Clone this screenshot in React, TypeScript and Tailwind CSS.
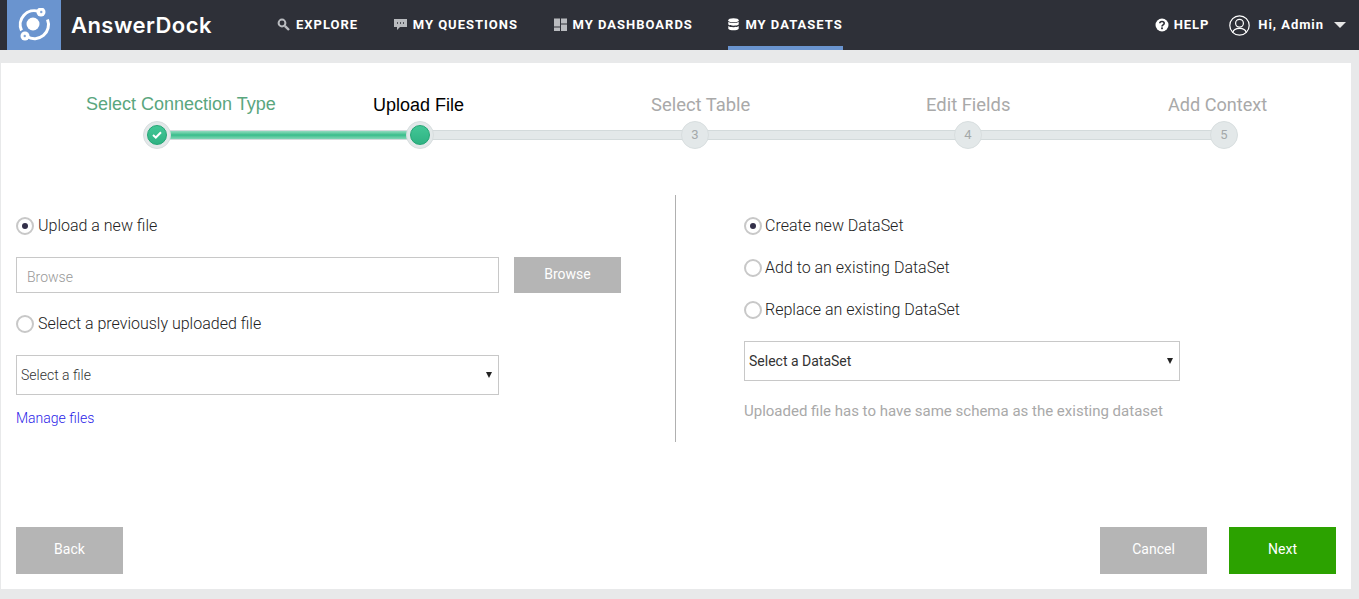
import { useState } from 'react'

function NavItem({ icon, label, active }: { icon: React.ReactNode; label: string; active?: boolean }) {
  return (
    <div className={`flex h-[50px] items-center gap-[6px] border-b-4 pt-[2px] ${active ? 'border-[#6a94cf]' : 'border-transparent'}`}>
      {icon}
      <span className="text-[13px] leading-none font-bold tracking-[1px] text-white">{label}</span>
    </div>
  )
}

function Logo() {
  return (
    <svg width="34" height="34" viewBox="0 0 34 34" fill="none">
      <path d="M22 3.5 A14 14 0 0 0 4.5 22.5" stroke="white" strokeWidth="3" />
      <path d="M10 28.5 A14 14 0 0 0 30.5 11.5" stroke="white" strokeWidth="3" />
      <circle cx="16" cy="16" r="6.5" fill="white" />
      <circle cx="24" cy="4" r="4.5" fill="white" />
      <circle cx="8" cy="28" r="4.5" fill="white" />
      <path d="M23 4 H25.5 M24.2 2.8 V5.2" stroke="#6a94cf" strokeWidth="1" />
      <path d="M6.5 28 H9 M7.8 26.8 V29.2" stroke="#6a94cf" strokeWidth="1" />
    </svg>
  )
}

function Header() {
  return (
    <div className="flex h-[50px] items-start bg-[#2e3038] pl-[7px] font-['Roboto',sans-serif]">
      <div className="flex h-[50px] w-[54px] items-center justify-center bg-[#6a94cf]">
        <Logo />
      </div>
      <div className="ml-[10px] flex h-[50px] w-[206px] items-center font-['Inter',sans-serif] text-[22px] font-semibold tracking-[0.45px] text-white">
        AnswerDock
      </div>
      <div className="flex gap-[35.5px]">
        <NavItem
          label="EXPLORE"
          icon={
            <svg width="13" height="13" viewBox="0 0 13 13" fill="none">
              <circle cx="5" cy="5" r="3.4" stroke="#b9bbbf" strokeWidth="2" />
              <path d="M7.8 7.8 L12 12" stroke="#b9bbbf" strokeWidth="2.4" />
            </svg>
          }
        />
        <NavItem
          label="MY QUESTIONS"
          icon={
            <svg width="13" height="13" viewBox="0 0 13 13">
              <path d="M0 1 H13 V9 H6 L3 12 V9 H0 Z" fill="#b9bbbf" />
              <path d="M3 5 H4 M6 5 H7 M9 5 H10" stroke="#2e3038" strokeWidth="1.4" />
            </svg>
          }
        />
        <NavItem
          label="MY DASHBOARDS"
          icon={
            <svg width="13" height="13" viewBox="0 0 13 13" fill="#b9bbbf">
              <rect x="0" y="0.5" width="6" height="8" />
              <rect x="7" y="0.5" width="6" height="5" />
              <rect x="0" y="9.5" width="6" height="3.5" />
              <rect x="7" y="6.5" width="6" height="6.5" />
            </svg>
          }
        />
        <NavItem
          active
          label="MY DATASETS"
          icon={
            <svg width="11" height="13" viewBox="0 0 11 13" fill="white">
              <ellipse cx="5.5" cy="2.2" rx="5.2" ry="2" />
              <path d="M0.3 3.8 C1.5 5.4 9.5 5.4 10.7 3.8 V6.6 C9.5 8.2 1.5 8.2 0.3 6.6 Z" />
              <path d="M0.3 8 C1.5 9.6 9.5 9.6 10.7 8 V10.8 C9.5 12.8 1.5 12.8 0.3 10.8 Z" />
            </svg>
          }
        />
      </div>
      <div className="ml-auto flex h-[50px] items-center pr-[13px] text-[13px] font-bold text-white">
        <svg width="14" height="14" viewBox="0 0 14 14">
          <circle cx="7" cy="7" r="6.5" fill="white" />
          <path d="M4.8 5.3 C4.8 2.8 9.2 2.8 9.2 5.3 C9.2 6.9 7 6.8 7 8.4" stroke="#2e3038" strokeWidth="1.6" fill="none" />
          <rect x="6.1" y="9.4" width="1.8" height="1.8" fill="#2e3038" />
        </svg>
        <span className="ml-[5px] tracking-[0.95px]">HELP</span>
        <svg width="21" height="21" viewBox="0 0 21 21" fill="none" stroke="white" strokeWidth="1.2" className="ml-[20px]">
          <circle cx="10.5" cy="10.5" r="9.7" />
          <circle cx="10.5" cy="8.2" r="3.9" />
          <path d="M3.8 17.5 C5 12 16 12 17.2 17.5" />
        </svg>
        <span className="ml-[8px] tracking-[0.95px]">Hi, Admin</span>
        <div className="ml-[10px] h-0 w-0 border-x-[6.5px] border-t-[6px] border-x-transparent border-t-[#e6e6e6]" />
      </div>
    </div>
  )
}

const labelClass = "font-['Liberation_Sans',sans-serif] text-[18px] leading-[22px] whitespace-nowrap"
const todoLabelClass = "mt-[1px] font-['Roboto',sans-serif] leading-[22px] whitespace-nowrap text-[#a9a9a9]"

function StepLabels() {
  return (
    <div className="flex items-start pl-[85px]">
      <div className={`${labelClass} w-[287px] text-[#5aa67e]`}>Select Connection Type</div>
      <div className={`${labelClass} mt-[1px] w-[278px] text-black`}>Upload File</div>
      <div className={`${todoLabelClass} w-[275px] text-[18.4px]`}>Select Table</div>
      <div className={`${todoLabelClass} w-[242px] text-[18.4px]`}>Edit Fields</div>
      <div className={`${todoLabelClass} text-[18.1px]`}>Add Context</div>
    </div>
  )
}

function StepDot({ state, n }: { state: 'done' | 'current' | 'todo'; n?: number }) {
  return (
    <div className="z-10 flex h-[28px] w-[28px] shrink-0 items-center justify-center rounded-full border border-[#d8dedf] bg-[#e3e8e9]">
      {state === 'todo' ? (
        <span className="font-['Roboto',sans-serif] text-[13px] text-[#a4a8a9]">{n}</span>
      ) : (
        <div className="flex h-[20px] w-[20px] items-center justify-center rounded-full border border-[#22a574] bg-gradient-to-b from-[#42c796] to-[#2fb283]">
          {state === 'done' && (
            <svg width="10" height="8" viewBox="0 0 10 8" fill="none">
              <path d="M1 4 L3.8 6.5 L9 1.2" stroke="white" strokeWidth="2" />
            </svg>
          )}
        </div>
      )}
    </div>
  )
}

function StepLine({ width, done }: { width: string; done?: boolean }) {
  return (
    <div className={`-mx-[2px] h-[10px] ${width} border-y border-[#d3dadb] ${done ? 'bg-gradient-to-b from-[#8fdcc0] via-[#35bd8b] to-[#7fd6b6]' : 'bg-[#e3e8e9]'}`} />
  )
}

function Stepper() {
  return (
    <div className="flex items-center pl-[142px]">
      <StepDot state="done" />
      <StepLine done width="w-[239px]" />
      <StepDot state="current" />
      <StepLine width="w-[251px]" />
      <StepDot state="todo" n={3} />
      <StepLine width="w-[249px]" />
      <StepDot state="todo" n={4} />
      <StepLine width="w-[232px]" />
      <StepDot state="todo" n={5} />
    </div>
  )
}

function Radio({ label, checked, gap = 'gap-[4px]' }: { label: string; checked?: boolean; gap?: string }) {
  return (
    <label className={`flex h-[20px] items-center ${gap} text-[16px] leading-[20px] font-light text-[#222]`}>
      <span className="flex h-[18px] w-[18px] items-center justify-center rounded-full border-2 border-[#c8c8c8] bg-white">
        {checked && <span className="h-[6px] w-[6px] rounded-full bg-[#33304a]" />}
      </span>
      {label}
    </label>
  )
}

function FakeSelect({ label, width, weight = 'font-normal' }: { label: string; width: string; weight?: string }) {
  return (
    <div className={`flex ${width} h-[40px] items-center justify-between border border-[#c8c8c8] bg-white pr-[6px] pl-[4px] text-[14px] ${weight} text-[#333]`}>
      {label}
      <span className="h-0 w-0 border-x-[3px] border-t-[6px] border-x-transparent border-t-[#222]" />
    </div>
  )
}

function GrayButton({ label }: { label: string }) {
  return (
    <button className="h-[47px] w-[107px] bg-[#b5b5b5] pb-[2px] text-[14px] text-white">{label}</button>
  )
}

export default function App() {
  const [fileName] = useState('')

  return (
    <div className="h-[599px] w-[1359px] overflow-hidden bg-[#e8e9ea] font-['Roboto',sans-serif]">
      <Header />
      <div className="mt-[13px] ml-[1px] flex h-[526px] w-[1350px] flex-col bg-white">
        <div className="pt-[30px]">
          <StepLabels />
          <div className="mt-[5px]">
            <Stepper />
          </div>
        </div>
        <div className="mt-[46px] flex h-[247px]">
          <div className="w-[675px] border-r border-[#b0b0b0] pt-[21px] pl-[15px]">
            <Radio checked label="Upload a new file" />
            <div className="mt-[21px] flex items-start gap-[15px]">
              <input
                readOnly
                value={fileName}
                placeholder="Browse"
                className="h-[36px] w-[483px] border border-[#c8c8c8] px-[10px] pt-[3px] text-[14px] font-light outline-none placeholder:text-[#999]"
              />
              <button className="h-[36px] w-[107px] bg-[#b5b5b5] pb-[2px] text-[14px] text-white">Browse</button>
            </div>
            <div className="mt-[21px]">
              <Radio label="Select a previously uploaded file" />
            </div>
            <div className="mt-[21px]">
              <FakeSelect label="Select a file" width="w-[483px]" weight="font-light" />
            </div>
            <a className="mt-[14px] block text-[14px] leading-[18px] font-light text-[#2a22e8]">Manage files</a>
          </div>
          <div className="pt-[21px] pl-[68px]">
            <Radio checked gap="gap-[3px]" label="Create new DataSet" />
            <div className="mt-[22px]">
              <Radio gap="gap-[3px]" label="Add to an existing DataSet" />
            </div>
            <div className="mt-[22px]">
              <Radio gap="gap-[3px]" label="Replace an existing DataSet" />
            </div>
            <div className="mt-[21px]">
              <FakeSelect label="Select a DataSet" width="w-[436px]" />
            </div>
            <p className="mt-[21px] text-[15px] leading-[18px] text-[#a9a9a9]">
              Uploaded file has to have same schema as the existing dataset
            </p>
          </div>
        </div>
        <div className="mt-[85px] flex items-start pr-[15px] pl-[15px]">
          <GrayButton label="Back" />
          <div className="ml-auto flex gap-[22px]">
            <GrayButton label="Cancel" />
            <button className="h-[47px] w-[107px] bg-[#2ca200] pb-[2px] text-[14px] text-white">Next</button>
          </div>
        </div>
      </div>
    </div>
  )
}
